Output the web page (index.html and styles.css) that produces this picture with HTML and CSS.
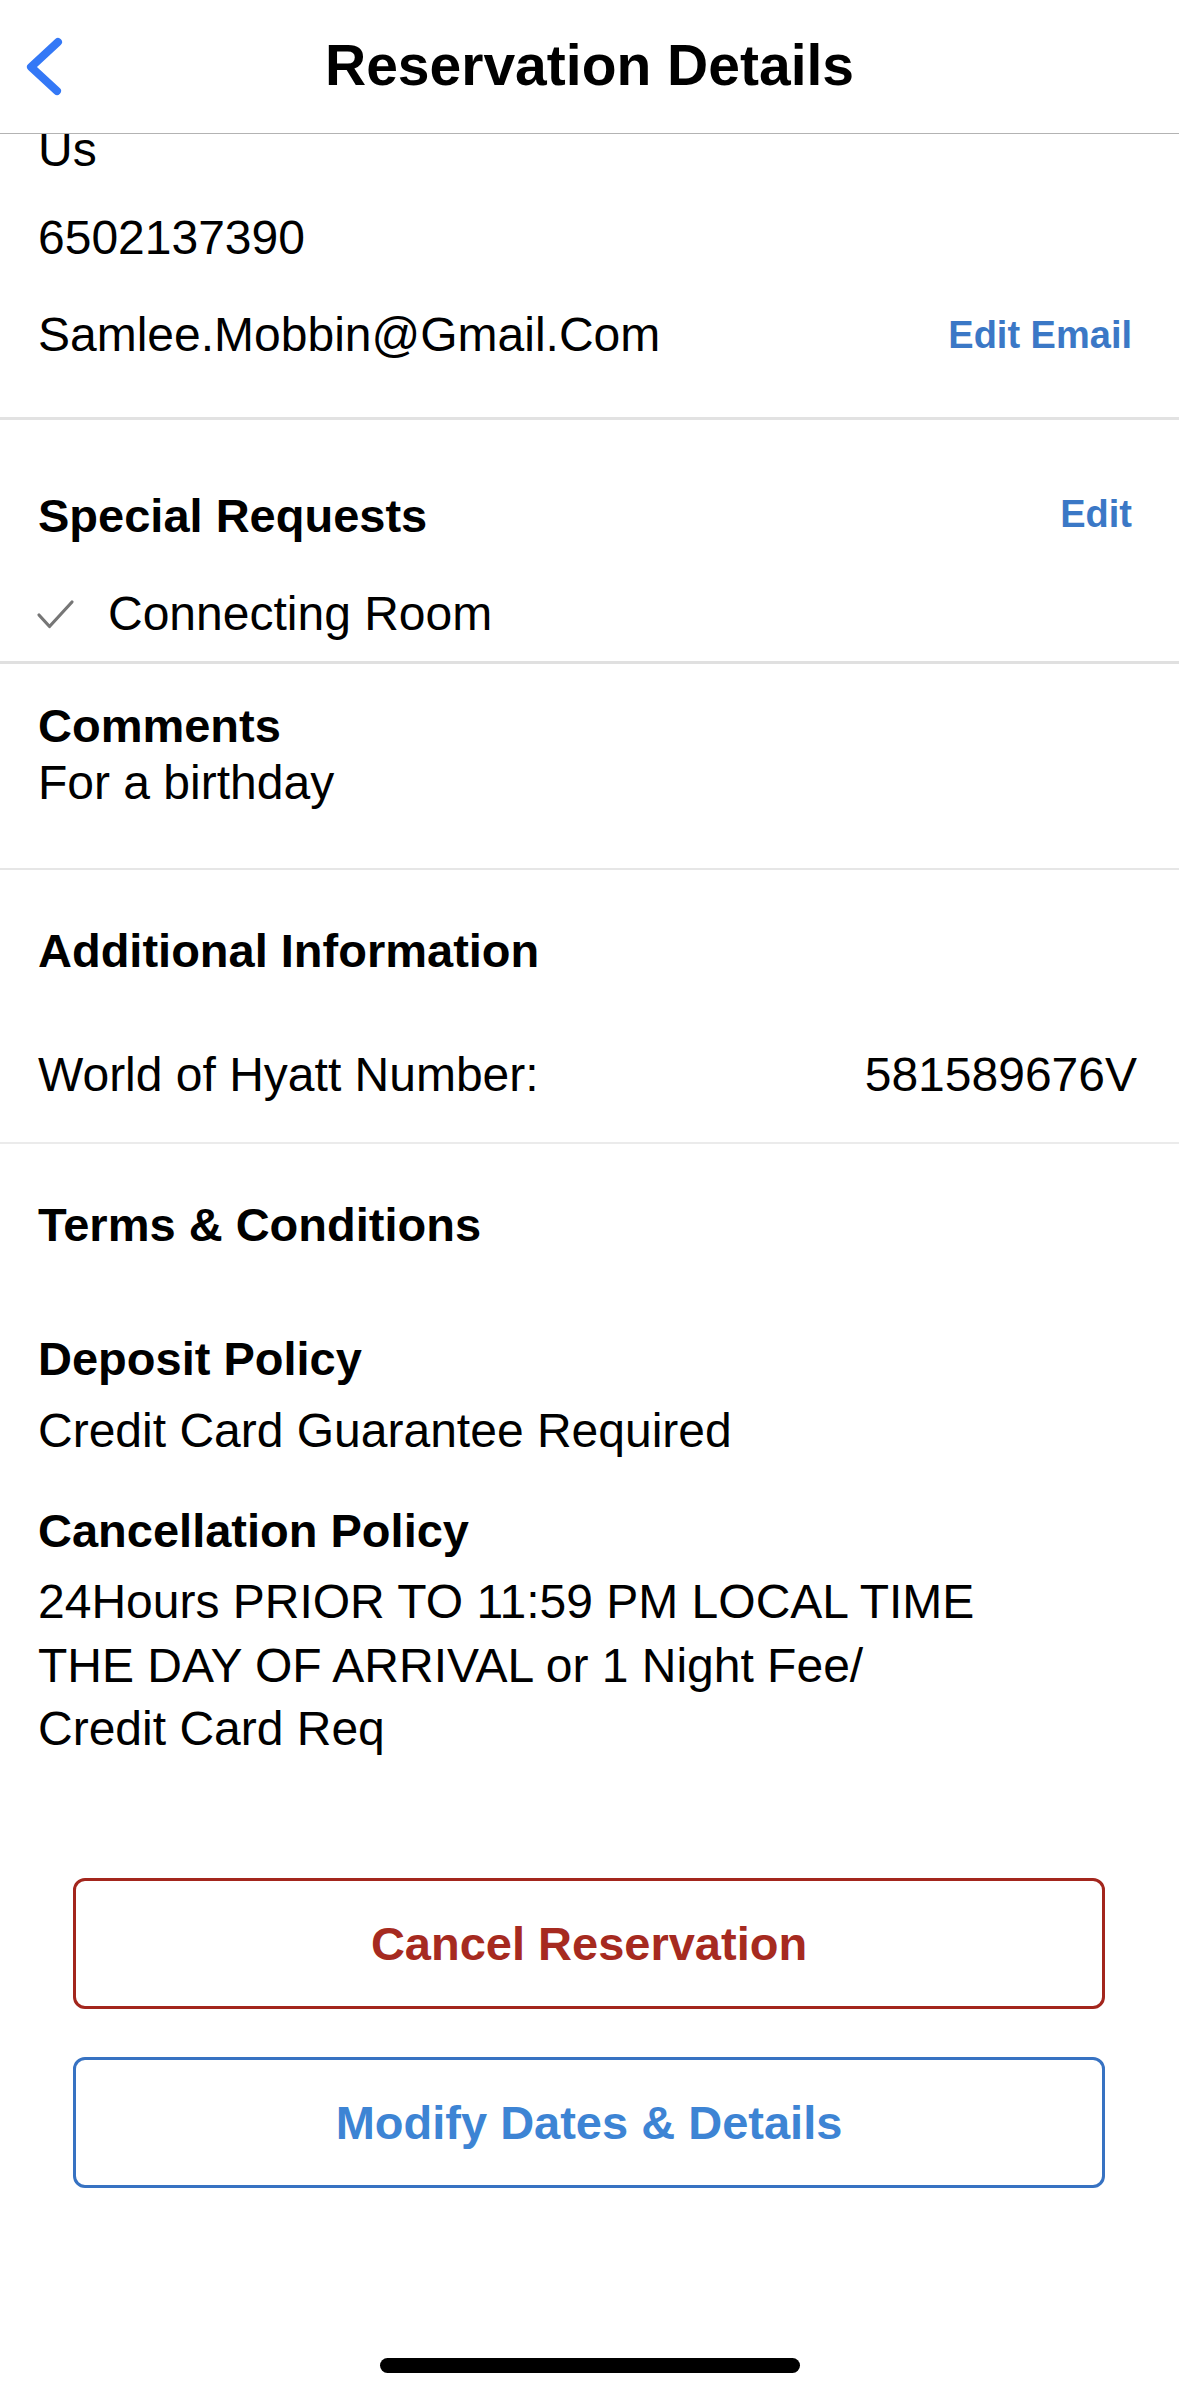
FILE: index.html
```html
<!DOCTYPE html>
<html lang="en">
<head>
<meta charset="utf-8">
<title>Reservation Details</title>
<link rel="stylesheet" href="styles.css">
</head>
<body>
<header class="nav">
  <div class="nav-left">
    <svg class="back" width="80" height="66" viewBox="0 0 80 66" aria-hidden="true">
      <polyline points="58,10 31,35 57,59" fill="none" stroke="#3478f6" stroke-width="8" stroke-linecap="round" stroke-linejoin="round"/>
    </svg>
  </div>
  <h1 class="nav-title">Reservation Details</h1>
  <div class="nav-right"></div>
</header>

<main class="content">
  <section class="section contact">
    <div class="text">Us</div>
    <div class="text phone">6502137390</div>
    <div class="row email-row">
      <span class="text">Samlee.Mobbin@Gmail.Com</span>
      <span class="link">Edit Email</span>
    </div>
  </section>

  <section class="section requests">
    <div class="row">
      <h2 class="heading">Special Requests</h2>
      <span class="link link-sm">Edit</span>
    </div>
    <div class="check-row">
      <svg class="check" width="44" height="64" viewBox="0 0 44 64" aria-hidden="true">
        <polyline points="5,33 15.5,44.5 38,20" fill="none" stroke="#767676" stroke-width="3.2" stroke-linecap="round" stroke-linejoin="round"/>
      </svg>
      <span class="text">Connecting Room</span>
    </div>
  </section>

  <section class="section comments">
    <h2 class="heading tight">Comments</h2>
    <div class="text">For a birthday</div>
  </section>

  <section class="section additional">
    <h2 class="heading">Additional Information</h2>
    <div class="row hyatt-row">
      <span class="text">World of Hyatt Number:</span>
      <span class="text hyatt-value">581589676V</span>
    </div>
  </section>

  <section class="section terms">
    <h2 class="heading">Terms &amp; Conditions</h2>
    <h3 class="heading deposit">Deposit Policy</h3>
    <div class="text deposit-text">Credit Card Guarantee Required</div>
    <h3 class="heading cancel-h">Cancellation Policy</h3>
    <p class="text policy">24Hours PRIOR TO 11:59 PM LOCAL TIME<br>THE DAY OF ARRIVAL or 1 Night Fee/<br>Credit Card Req</p>
  </section>

  <section class="actions">
    <button class="btn btn-cancel" type="button">Cancel Reservation</button>
    <button class="btn btn-modify" type="button">Modify Dates &amp; Details</button>
  </section>

  <div class="home-indicator"></div>
</main>
</body>
</html>
```

FILE: styles.css
```css
* {
  box-sizing: border-box;
  margin: 0;
  padding: 0;
}

html,
body {
  background: #ffffff;
}

body {
  width: 1179px;
  min-height: 2396px;
  font-family: "Liberation Sans", Arial, sans-serif;
  color: #000000;
  overflow: hidden;
}

/* Navigation bar */
.nav {
  position: sticky;
  top: 0;
  z-index: 2;
  height: 134px;
  padding-top: 32px;
  background: #ffffff;
  border-bottom: 1px solid #b3b3b3;
  display: grid;
  grid-template-columns: 1fr auto 1fr;
  align-items: start;
}

.back {
  display: block;
}

.nav-title {
  font-size: 57px;
  font-weight: 700;
  line-height: 66px;
  white-space: nowrap;
}

/* Content */
.content {
  margin-top: -16px;
}

.section {
  padding-left: 38px;
  padding-right: 47px;
}

.text {
  font-size: 48px;
  line-height: 64px;
  white-space: nowrap;
}

.heading {
  font-size: 47px;
  font-weight: 700;
  line-height: 60px;
  white-space: nowrap;
}

.heading.tight {
  line-height: 50px;
}

.link {
  font-size: 38px;
  font-weight: 700;
  line-height: 64px;
  color: #3b78c6;
  white-space: nowrap;
}

.link-sm {
  line-height: 56px;
}

.row {
  display: flex;
  justify-content: space-between;
  align-items: flex-start;
}

/* Contact */
.contact {
  padding-bottom: 50px;
  border-bottom: 3px solid #e2e2e2;
}

.phone {
  margin-top: 24px;
}

.email-row {
  margin-top: 33px;
}

/* Special requests */
.requests {
  padding-top: 66px;
  padding-bottom: 15px;
  border-bottom: 3px solid #e0e0e0;
}

.check-row {
  margin-top: 36px;
  display: flex;
  align-items: flex-start;
}

.check {
  display: block;
  margin-left: -4px;
  margin-right: 30px;
}

/* Comments */
.comments {
  padding-top: 37px;
  padding-bottom: 53px;
  border-bottom: 2px solid #e6e6e6;
}

/* Additional information */
.additional {
  padding-top: 51px;
  padding-bottom: 35px;
  border-bottom: 2px solid #ebebeb;
}

.hyatt-row {
  margin-top: 62px;
}

.hyatt-value {
  margin-right: -5px;
}

/* Terms */
.terms {
  padding-top: 51px;
}

.deposit {
  margin-top: 74px;
}

.deposit-text {
  margin-top: 10px;
}

.cancel-h {
  margin-top: 38px;
}

.policy {
  margin-top: 9px;
  line-height: 63.5px;
}

/* Actions */
.actions {
  padding: 117px 74px 0 73px;
  display: flex;
  flex-direction: column;
  gap: 48px;
}

.btn {
  height: 131px;
  width: 100%;
  border-radius: 12px;
  border: 3px solid;
  background: #ffffff;
  font-family: "Liberation Sans", Arial, sans-serif;
  font-size: 47px;
  font-weight: 700;
  display: flex;
  align-items: center;
  justify-content: center;
  cursor: pointer;
}

.btn-cancel {
  border-color: #a3261d;
  color: #a62a20;
}

.btn-modify {
  border-color: #3772c2;
  color: #3d84d4;
}

.home-indicator {
  width: 420px;
  height: 15px;
  margin: 170px auto 0;
  border-radius: 8px;
  background: #000000;
}
```
